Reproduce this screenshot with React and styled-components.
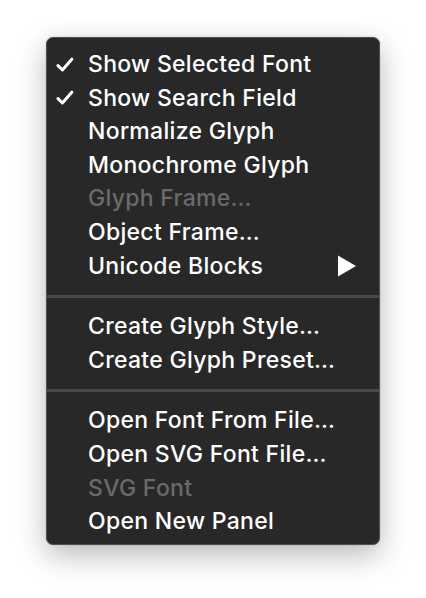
import React from "react";
import styled, { createGlobalStyle } from "styled-components";

const GlobalStyle = createGlobalStyle`
  html, body {
    margin: 0;
    padding: 0;
    background: #ffffff;
  }
  * {
    box-sizing: border-box;
  }
`;

const sections = [
  [
    { label: "Show Selected Font", checked: true },
    { label: "Show Search Field", checked: true },
    { label: "Normalize Glyph" },
    { label: "Monochrome Glyph" },
    { label: "Glyph Frame…", disabled: true },
    { label: "Object Frame…" },
    { label: "Unicode Blocks", submenu: true },
  ],
  [{ label: "Create Glyph Style…" }, { label: "Create Glyph Preset…" }],
  [
    { label: "Open Font From File…" },
    { label: "Open SVG Font File…" },
    { label: "SVG Font", disabled: true },
    { label: "Open New Panel" },
  ],
];

function CheckIcon() {
  return (
    <svg width="18" height="16" viewBox="0 0 18 16">
      <path
        d="M2 8.6 L6.4 13 L15.8 2.2"
        fill="none"
        stroke="#ffffff"
        strokeWidth="3"
        strokeLinecap="round"
        strokeLinejoin="round"
      />
    </svg>
  );
}

function SubmenuArrow() {
  return (
    <svg width="20" height="22" viewBox="0 0 20 22">
      <path d="M1 0.5 L19 11 L1 21.5 Z" fill="#ffffff" />
    </svg>
  );
}

export default function App() {
  return (
    <>
      <GlobalStyle />
      <Page>
        <Menu>
          {sections.map((items, i) => (
            <React.Fragment key={i}>
              {i > 0 && <Separator />}
              {items.map((item) => (
                <Item key={item.label} disabled={item.disabled}>
                  <CheckSlot>{item.checked && <CheckIcon />}</CheckSlot>
                  <Label>{item.label}</Label>
                  {item.submenu && (
                    <ArrowSlot>
                      <SubmenuArrow />
                    </ArrowSlot>
                  )}
                </Item>
              ))}
            </React.Fragment>
          ))}
        </Menu>
      </Page>
    </>
  );
}

const Page = styled.div`
  width: 426px;
  height: 598px;
  padding: 37px 0 0 46px;
`;

const Menu = styled.div`
  width: 334px;
  height: 508px;
  background: #282828;
  border: 1px solid #515151;
  border-radius: 7px;
  padding: 10px 0 5px;
  box-shadow: 0 10px 30px rgba(0, 0, 0, 0.28), 0 0 2px rgba(0, 0, 0, 0.2);
  display: flex;
  flex-direction: column;
`;

const Item = styled.div`
  flex-shrink: 0;
  height: 33.6px;
  display: flex;
  align-items: center;
  font-family: Inter, "Liberation Sans", sans-serif;
  font-size: 23px;
  font-weight: 500;
  letter-spacing: 0.3px;
  line-height: 33.6px;
  color: ${(p) => (p.disabled ? "#6a6a6a" : "#ffffff")};
`;

const CheckSlot = styled.div`
  width: 41px;
  padding-left: 9px;
  display: flex;
  align-items: center;
`;

const Label = styled.span`
  flex: 1;
  white-space: nowrap;
`;

const ArrowSlot = styled.div`
  width: 42px;
  display: flex;
  align-items: center;
`;

const Separator = styled.div`
  flex-shrink: 0;
  height: 3px;
  background: #4a4a4a;
  margin: 12px 0 12px;
`;
